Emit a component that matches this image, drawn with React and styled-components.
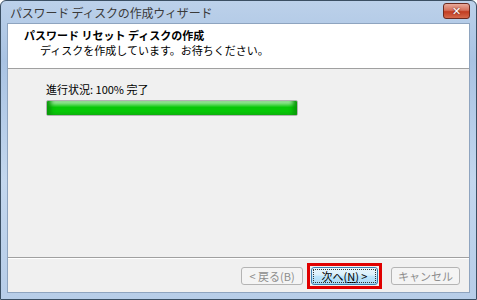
import React from "react";
import styled, { createGlobalStyle } from "styled-components";

const GlobalStyle = createGlobalStyle`
  html, body {
    margin: 0;
    padding: 0;
    background: #ffffff;
  }
  body {
    font-family: "Noto Sans CJK JP", "Liberation Sans", sans-serif;
  }
`;

const Window = styled.div`
  width: 477px;
  height: 300px;
  box-sizing: border-box;
  border: 1px solid #3b4f63;
  border-radius: 6px 6px 0 0;
  background: linear-gradient(to bottom, #bcd1ea 0%, #a9c3e3 20%, #c3d7ee 60%, #b7cde8 100%);
  display: flex;
  flex-direction: column;
  padding: 0 6px 6px 6px;
  overflow: hidden;
`;

const TitleBar = styled.div`
  height: 22px;
  display: flex;
  align-items: center;
  justify-content: space-between;
  padding: 0 0 0 3px;
`;

const TitleText = styled.span`
  font-size: 12px;
  color: #3a3a3a;
  letter-spacing: -0.2px;
`;

const CloseButton = styled.div`
  width: 25px;
  height: 14px;
  margin-top: -2px;
  border: 1px solid #6b2a20;
  border-radius: 3px;
  background: linear-gradient(to bottom, #e9a99a 0%, #d4705c 45%, #c23d22 55%, #d5694c 100%);
  display: flex;
  align-items: center;
  justify-content: center;
  color: #ffffff;
  font-size: 11px;
  font-weight: bold;
  font-family: "DejaVu Sans", sans-serif;
  line-height: 1;
  text-shadow: 0 0 2px #5a1a10;
`;

const Client = styled.div`
  flex: 1;
  display: flex;
  flex-direction: column;
  background: #f0f0f0;
  border: 1px solid #8ea4bf;
`;

const Header = styled.div`
  height: 45px;
  background: #ffffff;
  border-bottom: 1px solid #a0a0a0;
  padding: 2px 0 0 16px;
  box-sizing: border-box;
  display: flex;
  flex-direction: column;
`;

const HeaderTitle = styled.div`
  font-size: 11px;
  font-weight: bold;
  color: #000;
  line-height: 16px;
  margin-top: 1px;
`;

const HeaderSub = styled.div`
  font-size: 11px;
  color: #000;
  line-height: 14px;
  padding-left: 16px;
`;

const Body = styled.div`
  flex: 1;
  padding: 13px 0 0 38px;
  display: flex;
  flex-direction: column;
  gap: 4px;
  border-bottom: 1px solid #a0a0a0;
`;

const Label = styled.div`
  font-size: 11px;
  color: #000;
  line-height: 14px;
`;

const Track = styled.div`
  width: 252px;
  height: 16px;
  box-sizing: border-box;
  border: 1px solid #b2b2b2;
  border-radius: 2px;
  background: #e6e6e6;
  overflow: hidden;
`;

const Fill = styled.div`
  height: 100%;
  background: linear-gradient(to bottom, #c8f2c8 0%, #5ad85a 25%, #06c806 45%, #06c806 75%, #10b810 100%);
  box-shadow: inset 6px 0 4px -2px #0a9a0a, inset -6px 0 4px -2px #0a9a0a;
`;

const Footer = styled.div`
  height: 33px;
  border-top: 1px solid #ffffff;
  display: flex;
  align-items: center;
  justify-content: flex-end;
  padding-right: 9px;
`;

const Highlight = styled.div`
  padding: 1px;
  margin: 0 9px 0 4px;
  border: 3px solid #e00000;
  display: flex;
`;

const Button = styled.div`
  width: ${(p) => p.w || 62}px;
  height: 18px;
  box-sizing: border-box;
  border: 1px solid ${(p) => (p.active ? "#3c7fb1" : "#b4b4b4")};
  border-radius: 3px;
  background: ${(p) =>
    p.active
      ? "linear-gradient(to bottom, #eaf6fd 0%, #d9f0fc 45%, #bee6fd 50%, #a7d9f5 100%)"
      : "#f4f4f4"};
  color: ${(p) => (p.disabled ? "#8d8d8d" : "#000")};
  font-size: 11px;
  display: flex;
  align-items: center;
  justify-content: center;
  outline: ${(p) => (p.active ? "1px dotted #333" : "none")};
  outline-offset: -3px;
`;

export default function App() {
  return (
    <>
      <GlobalStyle />
      <Window>
        <TitleBar>
          <TitleText>パスワード ディスクの作成ウィザード</TitleText>
          <CloseButton>✕</CloseButton>
        </TitleBar>
        <Client>
          <Header>
            <HeaderTitle>パスワード リセット ディスクの作成</HeaderTitle>
            <HeaderSub>ディスクを作成しています。お待ちください。</HeaderSub>
          </Header>
          <Body>
            <Label>進行状況: 100% 完了</Label>
            <Track>
              <Fill style={{ width: "100%" }} />
            </Track>
          </Body>
          <Footer>
            <Button disabled>&lt; 戻る(B)</Button>
            <Highlight>
              <Button active w={67}>
                次へ(<u>N</u>) &gt;
              </Button>
            </Highlight>
            <Button disabled w={69}>キャンセル</Button>
          </Footer>
        </Client>
      </Window>
    </>
  );
}
